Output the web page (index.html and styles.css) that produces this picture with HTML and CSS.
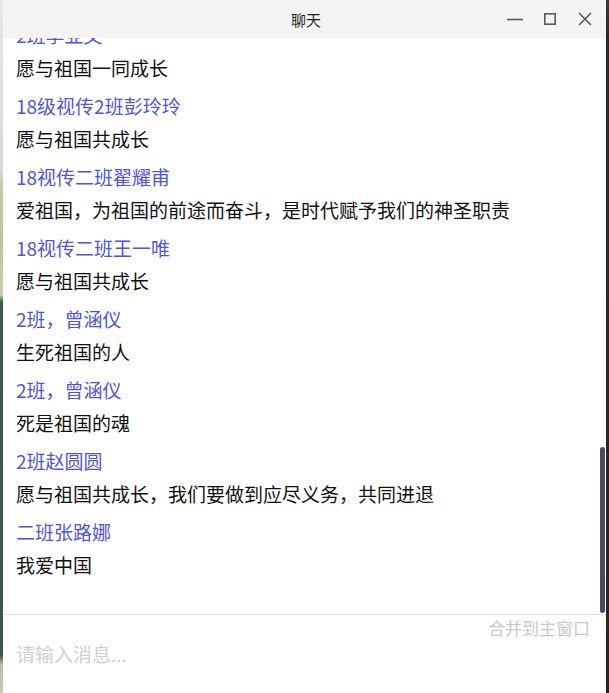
FILE: index.html
```html
<!DOCTYPE html>
<html lang="zh">
<head>
<meta charset="utf-8">
<title>聊天</title>
<link rel="stylesheet" href="styles.css">
</head>
<body>
<div class="screen">
  <div class="desk desk-left"></div>
  <div class="window">
    <div class="titlebar">
      <div class="title">聊天</div>
      <div class="controls">
        <svg class="ctl" viewBox="0 0 20 20" width="20" height="20"><path d="M2 10.5H18" stroke="#5a5a5a" stroke-width="1.6" fill="none"/></svg>
        <svg class="ctl" viewBox="0 0 20 20" width="20" height="20"><rect x="4.8" y="4.8" width="10.4" height="10.4" stroke="#5a5a5a" stroke-width="1.6" fill="none"/></svg>
        <svg class="ctl" viewBox="0 0 20 20" width="20" height="20"><path d="M4 4L16 16M16 4L4 16" stroke="#5a5a5a" stroke-width="1.6" fill="none"/></svg>
      </div>
    </div>
    <div class="messages">
      <div class="list">
        <div class="msg"><div class="name">2班李亚文</div><div class="text">愿与祖国一同成长</div></div>
        <div class="msg"><div class="name">18级视传2班彭玲玲</div><div class="text">愿与祖国共成长</div></div>
        <div class="msg"><div class="name">18视传二班翟耀甫</div><div class="text">爱祖国，为祖国的前途而奋斗，是时代赋予我们的神圣职责</div></div>
        <div class="msg"><div class="name">18视传二班王一唯</div><div class="text">愿与祖国共成长</div></div>
        <div class="msg"><div class="name">2班，曾涵仪</div><div class="text">生死祖国的人</div></div>
        <div class="msg"><div class="name">2班，曾涵仪</div><div class="text">死是祖国的魂</div></div>
        <div class="msg"><div class="name">2班赵圆圆</div><div class="text">愿与祖国共成长，我们要做到应尽义务，共同进退</div></div>
        <div class="msg"><div class="name">二班张路娜</div><div class="text">我爱中国</div></div>
      </div>
      <div class="scrollbar"></div>
    </div>
    <div class="composer">
      <div class="merge">合并到主窗口</div>
      <div class="placeholder">请输入消息...</div>
    </div>
  </div>
  <div class="desk desk-right"></div>
</div>
</body>
</html>
```

FILE: styles.css
```css
* { box-sizing: border-box; }
html, body {
  margin: 0;
  padding: 0;
  width: 609px;
  height: 693px;
  overflow: hidden;
  font-family: "Noto Sans CJK SC", "Noto Sans", sans-serif;
}
.screen {
  display: flex;
  width: 609px;
  height: 693px;
}
.desk { width: 3px; flex: none; }
.desk-left {
  background: linear-gradient(to bottom,
    #e6e6e6 0px, #e2e2e2 60px, #d8d8d8 170px,
    #c4ccab 185px, #b9c49c 240px, #c8ceb2 295px,
    #3d5a49 302px, #3b5747 655px,
    #b9c2a8 665px, #c6cbb5 693px);
}
.desk-right {
  background: linear-gradient(to bottom, #3a3a30 0px, #2a2a20 40px, #26261c 693px);
}
.window {
  width: 603px;
  flex: none;
  display: flex;
  flex-direction: column;
  background: #ffffff;
}
.titlebar {
  height: 38px;
  flex: none;
  background: #f4f4f4;
  display: flex;
  align-items: center;
  justify-content: center;
  position: relative;
  z-index: 2;
}
.title {
  font-size: 15px;
  color: #1e1e1e;
  margin-left: 3px;
}
.controls {
  position: absolute;
  right: 0;
  top: 0;
  height: 38px;
  display: flex;
  align-items: center;
  gap: 15px;
  padding-right: 11px;
}
.ctl { display: block; }
.messages {
  flex: none;
  height: 577px;
  position: relative;
  overflow: hidden;
  display: flex;
  flex-direction: column;
  justify-content: flex-end;
  border-bottom: 1px solid #e3e3e3;
}
.list {
  display: flex;
  flex-direction: column;
  gap: 10px;
  padding: 0 13px 35px 13px;
}
.msg {
  display: flex;
  flex-direction: column;
  gap: 5px;
}
.name {
  font-size: 19px;
  line-height: 28px;
  color: #4f55d6;
  white-space: nowrap;
}
.text {
  font-size: 19px;
  line-height: 28px;
  color: #111111;
  white-space: nowrap;
}
.scrollbar {
  position: absolute;
  right: 1px;
  top: 409px;
  width: 5px;
  height: 166px;
  border-radius: 3px;
  background: #474b5d;
}
.composer {
  flex: 1;
  display: flex;
  flex-direction: column;
  padding: 1px 16px 0 13px;
}
.merge {
  align-self: flex-end;
  font-size: 17px;
  line-height: 24px;
  color: #c9c9c9;
}
.placeholder {
  margin-top: 0;
  font-size: 19px;
  line-height: 28px;
  color: #cfcfcf;
}
```
